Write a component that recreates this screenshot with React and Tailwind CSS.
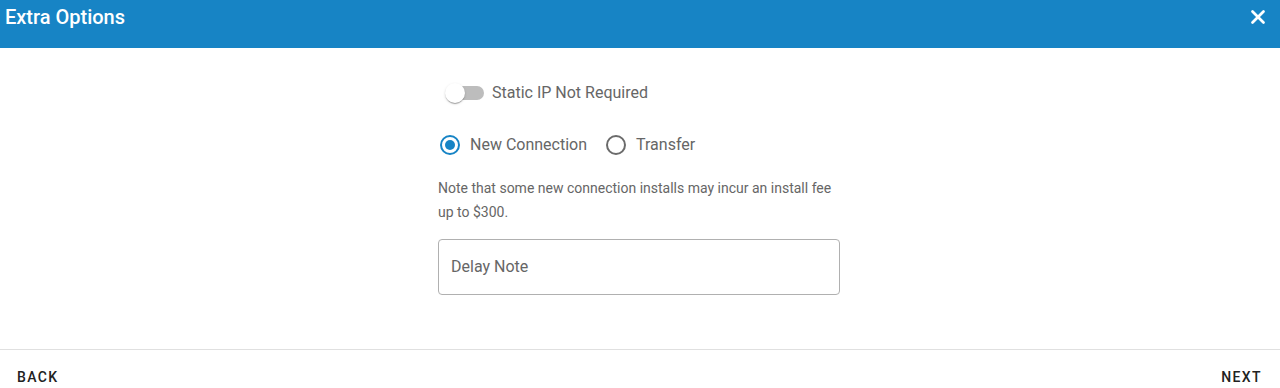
import { X } from 'lucide-react';

function Switch() {
  return (
    <span className="relative inline-flex h-[38px] w-[50px] shrink-0 items-center">
      <span className="absolute left-[8px] h-[14px] w-[38px] rounded-full bg-[#bdbdbd]" />
      <span className="absolute left-[7px] h-5 w-5 rounded-full bg-white shadow-[0_2px_1px_-1px_rgba(0,0,0,0.2),0_1px_1px_0_rgba(0,0,0,0.14),0_1px_3px_0_rgba(0,0,0,0.12)]" />
    </span>
  );
}

function Radio({ checked, label }) {
  return (
    <label className="flex items-center">
      <span className="flex h-[42px] w-[40px] items-center justify-center">
        <span
          className={`flex h-5 w-5 items-center justify-center rounded-full border-2 ${
            checked ? 'border-[#1784c5]' : 'border-[#6b6b6b]'
          }`}
        >
          {checked && <span className="h-[10px] w-[10px] rounded-full bg-[#1784c5]" />}
        </span>
      </span>
      <span className="text-base text-[#666]">{label}</span>
    </label>
  );
}

export default function App() {
  return (
    <div className="flex min-h-[388px] w-full flex-col bg-white font-['Roboto',sans-serif]">
      <div className="flex h-12 items-start justify-between bg-[#1784c5] pl-[5px] pr-[11px] pt-[3px]">
        <h2 className="text-xl font-medium leading-7 text-white">Extra Options</h2>
        <button type="button" className="mt-[3px] text-white" aria-label="Close">
          <X size={22} strokeWidth={3} />
        </button>
      </div>

      <div className="h-[301px] pt-[26px]">
        <div className="mx-auto flex w-[404px] flex-col">
          <div className="flex items-center">
            <Switch />
            <span className="ml-[4px] text-base text-[#666]">Static IP Not Required</span>
          </div>

          <div className="-ml-[8px] mt-3 flex items-center gap-[9px]">
            <Radio checked label="New Connection" />
            <Radio label="Transfer" />
          </div>

          <p className="mt-[10px] text-sm leading-6 text-[#666]">
            Note that some new connection installs may incur an install fee up to $300.
          </p>

          <div className="mt-[15px] flex h-[56px] w-[402px] items-center rounded border border-[#b0b0b0] px-[12px]">
            <span className="text-base text-[#666]">Delay Note</span>
          </div>
        </div>
      </div>

      <div className="flex items-center justify-between border-t border-[#e0e0e0] px-[8px] pt-[9px]">
        <button type="button" className="h-9 px-[9px] text-sm font-medium tracking-[0.1em] text-[#222]">
          BACK
        </button>
        <button type="button" className="h-9 px-[10px] text-sm font-medium tracking-[0.1em] text-[#222]">
          NEXT
        </button>
      </div>
    </div>
  );
}
